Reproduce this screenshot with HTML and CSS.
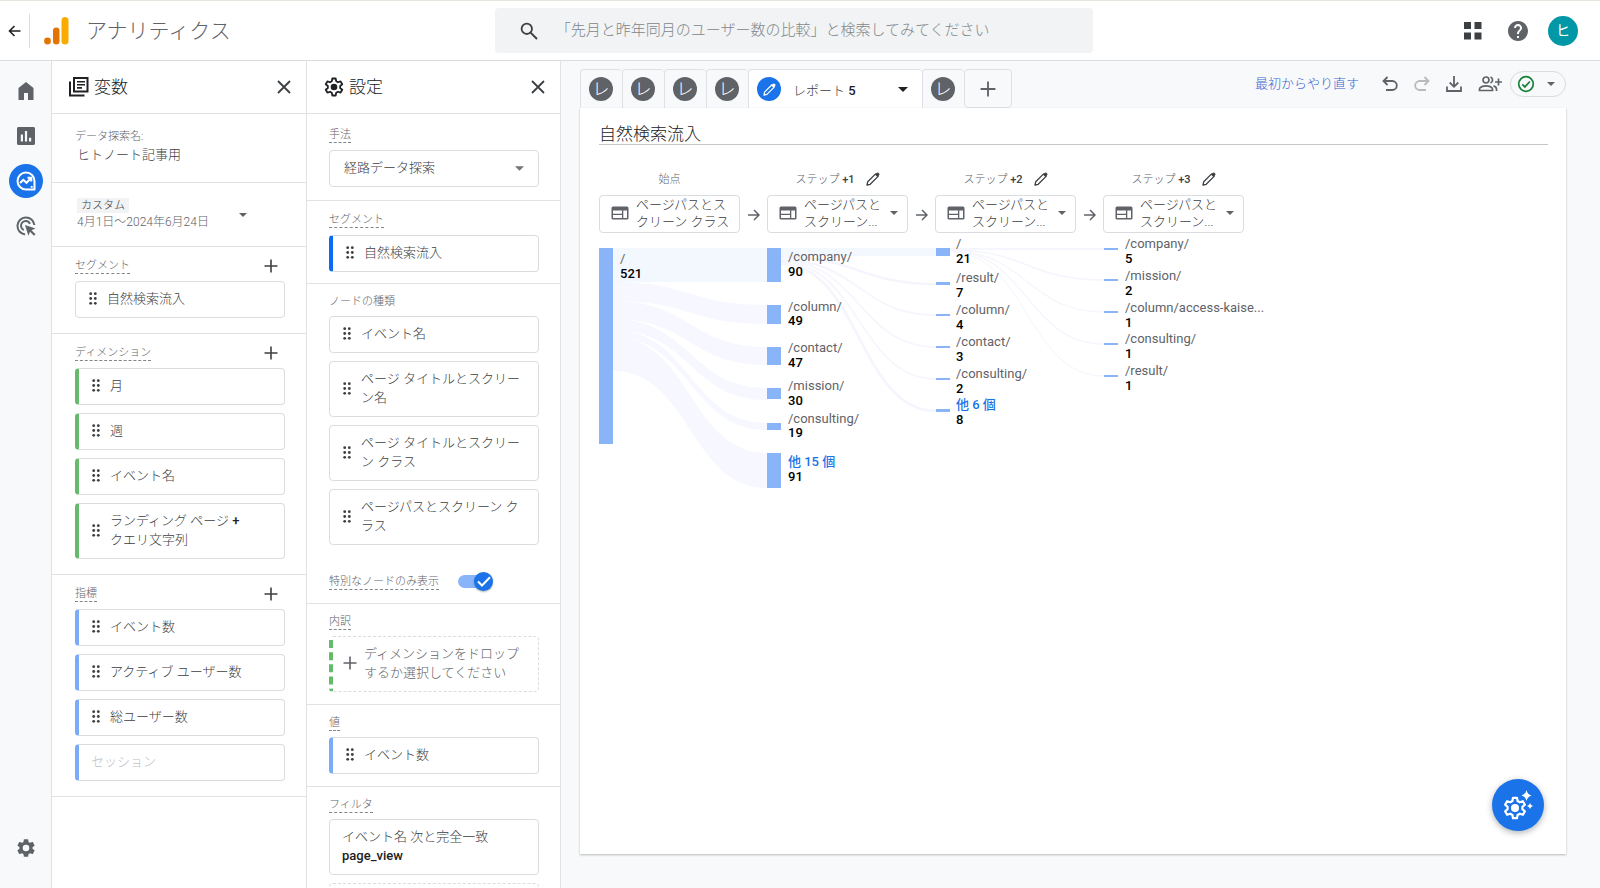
FILE: index.html
```html
<!DOCTYPE html>
<html lang="ja">
<head>
<meta charset="utf-8">
<meta name="viewport" content="width=device-width, initial-scale=1">
<title>アナリティクス</title>
<link rel="stylesheet" href="styles.css">
</head>
<body>
<svg class="sprite" aria-hidden="true">
  <symbol id="i-plus" viewBox="0 0 14 14"><path d="M7 .5v13M.5 7h13" fill="none" stroke="currentColor" stroke-width="1.6"/></symbol>
  <symbol id="i-close" viewBox="0 0 14 14"><path d="M1 1l12 12M13 1L1 13" fill="none" stroke="currentColor" stroke-width="1.8"/></symbol>
  <symbol id="i-grip" viewBox="0 0 8 13"><g fill="currentColor"><circle cx="1.7" cy="1.7" r="1.4"/><circle cx="6.3" cy="1.7" r="1.4"/><circle cx="1.7" cy="6.5" r="1.4"/><circle cx="6.3" cy="6.5" r="1.4"/><circle cx="1.7" cy="11.3" r="1.4"/><circle cx="6.3" cy="11.3" r="1.4"/></g></symbol>
  <symbol id="i-caret" viewBox="0 0 10 5"><path d="M0 0h10L5 5z" fill="currentColor"/></symbol>
  <symbol id="i-gear" viewBox="0 0 24 24"><path d="M19.14 12.94c.04-.3.06-.61.06-.94s-.02-.64-.07-.94l2.03-1.58a.49.49 0 0 0 .12-.61l-1.92-3.32a.49.49 0 0 0-.59-.22l-2.39.96a7 7 0 0 0-1.62-.94l-.36-2.54a.48.48 0 0 0-.48-.41h-3.84a.47.47 0 0 0-.47.41l-.36 2.54c-.59.24-1.13.57-1.62.94l-2.39-.96a.48.48 0 0 0-.59.22L2.74 8.87a.47.47 0 0 0 .12.61l2.03 1.58c-.05.3-.09.63-.09.94s.02.64.07.94l-2.03 1.58a.49.49 0 0 0-.12.61l1.92 3.32c.12.22.37.29.59.22l2.39-.96c.5.38 1.03.7 1.62.94l.36 2.54c.05.24.24.41.48.41h3.84c.24 0 .44-.17.47-.41l.36-2.54a6.7 6.7 0 0 0 1.62-.94l2.39.96c.22.08.47 0 .59-.22l1.92-3.32a.47.47 0 0 0-.12-.61zM12 15.6a3.6 3.6 0 1 1 0-7.2 3.6 3.6 0 0 1 0 7.2z" fill="currentColor"/></symbol>
  <symbol id="i-gear-line" viewBox="0 0 24 24"><path d="M10 1.8h4l.6 3.2 2.2 1.3 3.1-1.1 2 3.5-2.5 2.1v2.4l2.5 2.1-2 3.5-3.1-1.1-2.2 1.3-.6 3.2h-4L9.400 19l-2.200-1.300-3.100 1.100-2-3.500 2.500-2.100v-2.400L2.100 8.700l2-3.500 3.100 1.100L9.400 5z" fill="none" stroke="currentColor" stroke-width="2.2" stroke-linejoin="round"/><circle cx="12" cy="12" r="4" fill="currentColor"/></symbol>
  <symbol id="i-pencil" viewBox="0 0 14 14"><path d="M1 13l.7-3.200L9.600 1.900l2.500 2.500-7.900 7.900z" fill="none" stroke="currentColor" stroke-width="1.3" stroke-linejoin="round"/><path d="M9 2.600L11 .7q.7-.5 1.300 0l1 1q.5.600 0 1.300l-1.900 2z" fill="currentColor"/></symbol>
  <symbol id="i-web" viewBox="0 0 18 14"><path fill="currentColor" fill-rule="evenodd" d="M2 .5h14q1.500 0 1.500 1.500v10q0 1.500-1.500 1.500H2Q.5 13.500.5 12V2Q.5.500 2 .5zM2 4.500v3.200h9V4.500zM2 8.900V12h9V8.900zM12.300 4.500V12H16V4.500z"/></symbol>
  <symbol id="i-arrow" viewBox="0 0 12 12"><path d="M0 6h11M6 1l5 5-5 5" fill="none" stroke="currentColor" stroke-width="1.500"/></symbol>
</svg>

<header class="topbar">
  <button class="icon-btn back" aria-label="戻る"><svg width="13" height="12" viewBox="0 0 13 12"><path d="M12.500 6H1.500M6.500 1L1.500 6l5 5" fill="none" stroke="currentColor" stroke-width="1.600"/></svg></button>
  <span class="rule"></span>
  <svg class="logo" width="25" height="28" viewBox="0 0 25 28" aria-hidden="true"><rect x="17.500" width="7" height="27.500" rx="3.500" fill="#f9ab00"/><rect x="9" y="10.500" width="6.500" height="17" rx="3.250" fill="#e37400"/><circle cx="3.500" cy="24" r="3.400" fill="#e37400"/></svg>
  <h1 class="brand">アナリティクス</h1>
  <label class="search">
    <svg width="18" height="18" viewBox="0 0 18 18" aria-hidden="true"><circle cx="6.800" cy="6.800" r="5.200" fill="none" stroke="currentColor" stroke-width="1.800"/><path d="M10.600 10.600L17 17" stroke="currentColor" stroke-width="2"/></svg>
    <input type="search" aria-label="検索" placeholder="「先月と昨年同月のユーザー数の比較」と検索してみてください">
  </label>
  <div class="account">
    <button class="icon-btn apps" aria-label="アプリ"><svg width="18" height="18" viewBox="0 0 18 18"><path d="M0 0h7v7H0zM10.500 0h7v7h-7zM0 10.500h7v7H0zM10.500 10.500h7v7h-7z" fill="currentColor"/></svg></button>
    <button class="icon-btn" aria-label="ヘルプ"><svg width="20" height="20" viewBox="2 2 20 20"><path fill="currentColor" d="M12 2C6.480 2 2 6.480 2 12s4.480 10 10 10 10-4.480 10-10S17.520 2 12 2zm1 17h-2v-2h2v2zm2.070-7.750l-.9.920C13.450 12.900 13 13.500 13 15h-2v-.5c0-1.100.450-2.100 1.170-2.830l1.240-1.260c.370-.360.590-.860.590-1.410 0-1.100-.9-2-2-2s-2 .9-2 2H8c0-2.210 1.790-4 4-4s4 1.790 4 4c0 .880-.360 1.680-.930 2.250z"/></svg></button>
    <button class="avatar" aria-label="アカウント">ヒ</button>
  </div>
</header>

<div class="shell">
  <nav class="rail" aria-label="メイン">
    <a href="#" class="rail-item" aria-label="ホーム"><svg width="20" height="20" viewBox="2 2 20 20"><path d="M4.500 21V9L12 3l7.500 6v12H14v-7h-4v7z" fill="currentColor"/></svg></a>
    <a href="#" class="rail-item" aria-label="レポート"><svg width="18" height="18" viewBox="3 3 18 18"><path d="M19.500 3h-15C3.700 3 3 3.700 3 4.500v15c0 .8.700 1.500 1.500 1.500h15c.8 0 1.500-.7 1.500-1.500v-15c0-.8-.7-1.500-1.500-1.500zM9 17.500H6.800v-7H9zm4.100 0h-2.200V7h2.200zm4.100 0H15v-3.800h2.200z" fill="currentColor"/></svg></a>
    <a href="#" class="rail-item active" aria-label="探索"><svg width="20" height="20" viewBox="0 0 20 20"><path d="M18.500 18.500H10A8.500 8.500 0 1 1 18.500 10z" fill="none" stroke="currentColor" stroke-width="2" stroke-linejoin="round"/><path d="M4 12l3.300-3.200 3.200 3 4.300-4.500M11.500 6.800h3.800v3.800" fill="none" stroke="currentColor" stroke-width="2"/><circle cx="15.700" cy="15.900" r="1.100" fill="currentColor"/></svg></a>
    <a href="#" class="rail-item" aria-label="広告"><svg width="20" height="20" viewBox="0 0 20 20"><g fill="none" stroke="currentColor" stroke-width="2"><path d="M9 18.400A8.500 8.500 0 1 1 18.400 9"/><path d="M7.800 14A4.700 4.700 0 1 1 14 7.800"/></g><path d="M9 9l10.500 3.500-4 1.800 4 4-1.500 1.500-4-4-1.600 4z" fill="currentColor"/></svg></a>
    <a href="#" class="rail-item bottom" aria-label="管理"><svg width="22" height="22"><use href="#i-gear"/></svg></a>
  </nav>

  <section class="panel">
    <header class="panel-head">
      <svg width="20" height="20" viewBox="0 0 20 20" aria-hidden="true"><g fill="none" stroke="currentColor" stroke-width="2"><rect x="5" y="1" width="13.500" height="13.500"/><path d="M1 4.500V18.500h14.500"/></g><path d="M8 4.700h8M8 7.800h8M8 10.900h5" stroke="currentColor" stroke-width="1.600"/></svg>
      <h2>変数</h2>
      <button class="icon-btn" aria-label="変数を閉じる"><svg width="14" height="14"><use href="#i-close"/></svg></button>
    </header>
    <div class="block name-block">
      <label for="exp-name">データ探索名:</label>
      <input id="exp-name" class="name-input" value="ヒトノート記事用">
    </div>
    <div class="block date-block">
      <button class="date-btn">
        <span class="date-text"><span class="badge">カスタム</span><span>4月1日〜2024年6月24日</span></span>
        <svg width="8" height="4"><use href="#i-caret"/></svg>
      </button>
    </div>
    <div class="block">
      <div class="block-head"><h3 class="hint">セグメント</h3><button class="icon-btn" aria-label="セグメントを追加"><svg width="14" height="14"><use href="#i-plus"/></svg></button></div>
      <div class="chips"><div class="chip"><svg class="grip"><use href="#i-grip"/></svg><span>自然検索流入</span></div></div>
    </div>
    <div class="block">
      <div class="block-head"><h3 class="hint">ディメンション</h3><button class="icon-btn" aria-label="ディメンションを追加"><svg width="14" height="14"><use href="#i-plus"/></svg></button></div>
      <div class="chips">
        <div class="chip green"><svg class="grip"><use href="#i-grip"/></svg><span>月</span></div>
        <div class="chip green"><svg class="grip"><use href="#i-grip"/></svg><span>週</span></div>
        <div class="chip green"><svg class="grip"><use href="#i-grip"/></svg><span>イベント名</span></div>
        <div class="chip green"><svg class="grip"><use href="#i-grip"/></svg><span>ランディング ページ <b>+</b><br>クエリ文字列</span></div>
      </div>
    </div>
    <div class="block">
      <div class="block-head"><h3 class="hint">指標</h3><button class="icon-btn" aria-label="指標を追加"><svg width="14" height="14"><use href="#i-plus"/></svg></button></div>
      <div class="chips">
        <div class="chip blue"><svg class="grip"><use href="#i-grip"/></svg><span>イベント数</span></div>
        <div class="chip blue"><svg class="grip"><use href="#i-grip"/></svg><span>アクティブ ユーザー数</span></div>
        <div class="chip blue"><svg class="grip"><use href="#i-grip"/></svg><span>総ユーザー数</span></div>
        <div class="chip blue muted"><span>セッション</span></div>
      </div>
    </div>
  </section>

  <section class="panel settings">
    <header class="panel-head">
      <svg width="20" height="20" aria-hidden="true"><use href="#i-gear-line"/></svg>
      <h2>設定</h2>
      <button class="icon-btn" aria-label="設定を閉じる"><svg width="14" height="14"><use href="#i-close"/></svg></button>
    </header>
    <div class="block method-block">
      <div class="block-head"><label class="hint" for="method">手法</label></div>
      <div class="select-wrap">
        <select id="method"><option>経路データ探索</option></select>
        <svg width="9" height="5" aria-hidden="true"><use href="#i-caret"/></svg>
      </div>
    </div>
    <div class="block segment-block">
      <div class="block-head"><h3 class="hint">セグメント</h3></div>
      <div class="chips"><div class="chip strong"><svg class="grip"><use href="#i-grip"/></svg><span>自然検索流入</span></div></div>
    </div>
    <div class="block">
      <div class="block-head"><h3 class="hint plain">ノードの種類</h3></div>
      <div class="chips">
        <div class="chip"><svg class="grip"><use href="#i-grip"/></svg><span>イベント名</span></div>
        <div class="chip"><svg class="grip"><use href="#i-grip"/></svg><span>ページ タイトルとスクリーン名</span></div>
        <div class="chip"><svg class="grip"><use href="#i-grip"/></svg><span>ページ タイトルとスクリーン クラス</span></div>
        <div class="chip"><svg class="grip"><use href="#i-grip"/></svg><span>ページパスとスクリーン クラス</span></div>
      </div>
      <div class="toggle-row">
        <label class="hint" for="unique">特別なノードのみ表示</label>
        <span class="switch"><input type="checkbox" id="unique" checked><span class="knob"><svg width="14" height="11" viewBox="0 0 14 11"><path d="M1 5.500l4 4L13 1.300" fill="none" stroke="#fff" stroke-width="2"/></svg></span></span>
      </div>
    </div>
    <div class="block">
      <div class="block-head"><h3 class="hint">内訳</h3></div>
      <button class="drop"><svg width="14" height="14"><use href="#i-plus"/></svg><span>ディメンションをドロップするか選択してください</span></button>
    </div>
    <div class="block">
      <div class="block-head"><h3 class="hint">値</h3></div>
      <div class="chips"><div class="chip blue"><svg class="grip"><use href="#i-grip"/></svg><span>イベント数</span></div></div>
    </div>
    <div class="block">
      <div class="block-head"><h3 class="hint">フィルタ</h3></div>
      <div class="chips">
        <div class="chip filter"><span>イベント名 次と完全一致<br><b>page_view</b></span></div>
        <button class="drop bare" aria-label="フィルタを追加"></button>
      </div>
    </div>
  </section>

  <main class="stage">
    <div class="strip">
      <div class="tabs" role="tablist">
        <button class="tab" role="tab"><span class="dot">レ</span></button>
        <button class="tab" role="tab"><span class="dot">レ</span></button>
        <button class="tab" role="tab"><span class="dot">レ</span></button>
        <button class="tab" role="tab"><span class="dot">レ</span></button>
        <button class="tab current" role="tab" aria-selected="true"><span class="dot"><svg width="13" height="13"><use href="#i-pencil"/></svg></span><span class="tab-name">レポート <b>5</b></span><svg width="10" height="5"><use href="#i-caret"/></svg></button>
        <button class="tab" role="tab"><span class="dot">レ</span></button>
        <button class="tab add" aria-label="タブを追加"><svg width="16" height="16"><use href="#i-plus"/></svg></button>
      </div>
      <div class="tools">
        <a href="#" class="reset">最初からやり直す</a>
        <button class="icon-btn" aria-label="元に戻す"><svg width="16" height="16" viewBox="0 0 16 16"><path d="M5.500 1L1.500 5l4 4M1.500 5h8.800a4.500 4.500 0 0 1 0 9H4" fill="none" stroke="currentColor" stroke-width="1.800"/></svg></button>
        <button class="icon-btn faded" aria-label="やり直す"><svg width="16" height="16" viewBox="0 0 16 16"><path d="M10.500 1l4 4-4 4M14.500 5H5.700a4.500 4.500 0 0 0 0 9H12" fill="none" stroke="currentColor" stroke-width="1.800"/></svg></button>
        <button class="icon-btn" aria-label="ダウンロード"><svg width="16" height="16" viewBox="0 0 16 16"><path d="M8 0v10.500M3.700 6.500L8 10.800l4.300-4.300M1 10.500V15h14v-4.500" fill="none" stroke="currentColor" stroke-width="1.800"/></svg></button>
        <button class="icon-btn" aria-label="共有"><svg width="24" height="16" viewBox="0 0 24 16"><g fill="none" stroke="currentColor" stroke-width="1.700"><circle cx="8" cy="4" r="3"/><path d="M1.500 14.500V13c0-2 4-3.200 6.500-3.200s6.500 1.200 6.500 3.200v1.500zM12.500 1a3.200 3.200 0 0 1 0 6M15.500 9.900c1.800.6 3 1.600 3 3.100v2M20.500 2.500v7M17 6h7"/></g></svg></button>
        <button class="status" aria-label="ステータス"><svg width="18" height="18" viewBox="0 0 18 18"><g fill="none" stroke="#188038" stroke-width="1.700"><circle cx="9" cy="9" r="7.300"/><path d="M5.300 9.300l2.600 2.600 5-5.400"/></g></svg><svg width="8" height="4"><use href="#i-caret"/></svg></button>
      </div>
    </div>

    <div class="card">
      <input class="title" aria-label="タイトル" value="自然検索流入">
      <div class="steps">
        <div class="step">
          <div class="step-label">始点</div>
          <button class="step-box"><svg width="18" height="14"><use href="#i-web"/></svg><span>ページパスとスクリーン クラス</span></button>
        </div>
        <svg class="step-arrow"><use href="#i-arrow"/></svg>
        <div class="step">
          <div class="step-label"><span>ステップ <b>+1</b></span><button class="icon-btn" aria-label="編集"><svg width="14" height="14"><use href="#i-pencil"/></svg></button></div>
          <button class="step-box"><svg width="18" height="14"><use href="#i-web"/></svg><span>ページパスと<br>スクリーン...</span><svg class="caret" width="8" height="4"><use href="#i-caret"/></svg></button>
        </div>
        <svg class="step-arrow"><use href="#i-arrow"/></svg>
        <div class="step">
          <div class="step-label"><span>ステップ <b>+2</b></span><button class="icon-btn" aria-label="編集"><svg width="14" height="14"><use href="#i-pencil"/></svg></button></div>
          <button class="step-box"><svg width="18" height="14"><use href="#i-web"/></svg><span>ページパスと<br>スクリーン...</span><svg class="caret" width="8" height="4"><use href="#i-caret"/></svg></button>
        </div>
        <svg class="step-arrow"><use href="#i-arrow"/></svg>
        <div class="step">
          <div class="step-label"><span>ステップ <b>+3</b></span><button class="icon-btn" aria-label="編集"><svg width="14" height="14"><use href="#i-pencil"/></svg></button></div>
          <button class="step-box"><svg width="18" height="14"><use href="#i-web"/></svg><span>ページパスと<br>スクリーン...</span><svg class="caret" width="8" height="4"><use href="#i-caret"/></svg></button>
        </div>
      </div>

      <svg class="flow" width="700" height="270" viewBox="0 -15 700 270" role="img" aria-label="経路データ探索">
        <path class="link first" d="M14 0H168V34H14z"/>
        <g class="link">
          <path d="M14 34C91 34 91 57 168 57V76C91 76 91 53 14 53z"/>
          <path d="M14 53C91 53 91 99 168 99V117C91 117 91 71 14 71z"/>
          <path d="M14 71C91 71 91 140 168 140V152C91 152 91 82 14 82z"/>
          <path d="M14 82C91 82 91 175 168 175V182C91 182 91 89 14 89z"/>
          <path d="M14 89C91 89 91 205 168 205V240C91 240 91 123 14 123z"/>
        </g>
        <path class="link first" d="M182 0H337V8H182z"/>
        <g class="thread">
          <path stroke-width="2.500" d="M182 9C260 9 260 36 337 36"/>
          <path stroke-width="1.800" d="M182 12C260 12 260 67 337 67"/>
          <path stroke-width="1.400" d="M182 13C260 13 260 99 337 99"/>
          <path stroke-width="1.400" d="M182 14C260 14 260 131 337 131"/>
          <path stroke-width="2.500" d="M182 16C260 16 260 163 337 163"/>
          <path stroke-width="2" d="M351 1H505"/>
          <path stroke-width="1.500" d="M351 2C428 2 428 32 505 32"/>
          <path stroke-width="1.200" d="M351 3C428 3 428 64 505 64"/>
          <path stroke-width="1.200" d="M351 3C428 3 428 96 505 96"/>
          <path stroke-width="1" d="M351 4C428 4 428 128 505 128"/>
        </g>
        <g class="node">
          <rect width="14" height="196"/>
          <rect x="168" width="14" height="34"/><rect x="168" y="57" width="14" height="19"/><rect x="168" y="99" width="14" height="18"/><rect x="168" y="140" width="14" height="11"/><rect x="168" y="175" width="14" height="7"/><rect x="168" y="205" width="14" height="35"/>
          <rect x="337" width="14" height="8"/><rect x="337" y="34" width="14" height="3"/><rect x="337" y="66" width="14" height="2"/><rect x="337" y="98" width="14" height="2"/><rect x="337" y="130" width="14" height="2"/><rect x="337" y="161" width="14" height="3"/>
          <rect x="505" width="14" height="2"/><rect x="505" y="31" width="14" height="2"/><rect x="505" y="63" width="14" height="2"/><rect x="505" y="95" width="14" height="2"/><rect x="505" y="127" width="14" height="2"/>
        </g>
        <g class="path-name">
          <text x="21" y="15">/</text>
          <text x="189" y="13">/company/</text><text x="189" y="63">/column/</text><text x="189" y="104">/contact/</text><text x="189" y="142">/mission/</text><text x="189" y="175">/consulting/</text>
          <text x="357" y="0">/</text><text x="357" y="34">/result/</text><text x="357" y="66">/column/</text><text x="357" y="98">/contact/</text><text x="357" y="130">/consulting/</text>
          <text x="526" y="0">/company/</text><text x="526" y="32">/mission/</text><text x="526" y="64">/column/access-kaise...</text><text x="526" y="95">/consulting/</text><text x="526" y="127">/result/</text>
        </g>
        <g class="more"><text x="189" y="218">他 15 個</text><text x="357" y="161">他 6 個</text></g>
        <g class="count">
          <text x="21" y="30">521</text>
          <text x="189" y="28">90</text><text x="189" y="77">49</text><text x="189" y="119">47</text><text x="189" y="157">30</text><text x="189" y="189">19</text><text x="189" y="233">91</text>
          <text x="357" y="15">21</text><text x="357" y="49">7</text><text x="357" y="81">4</text><text x="357" y="113">3</text><text x="357" y="145">2</text><text x="357" y="176">8</text>
          <text x="526" y="15">5</text><text x="526" y="47">2</text><text x="526" y="79">1</text><text x="526" y="110">1</text><text x="526" y="142">1</text>
        </g>
      </svg>

      <button class="fab" aria-label="設定候補"><svg width="32" height="32" viewBox="0 0 32 32"><g transform="translate(1 7)"><use href="#i-gear-line" width="24" height="24"/></g><path d="M24.500 1q1 4.500 5 5.500-4 1-5 5.500-1-4.500-5-5.500 4-1 5-5.500zM28 14q.7 2.500 3 3-2.300.6-3 3-.7-2.400-3-3 2.300-.5 3-3z" fill="currentColor"/></svg></button>
    </div>
  </main>
</div>
</body>
</html>
```

FILE: styles.css
```css
* { box-sizing: border-box; }

body {
  margin: 0;
  height: 100vh;
  display: flex;
  flex-direction: column;
  overflow: hidden;
  border-top: 1px solid #e6e6de;
  background: #fff;
  color: #3c4043;
  font-family: Roboto, "Noto Sans CJK JP", sans-serif;
  font-size: 13px;
  font-weight: 300;
  line-height: 19px;
}

h1, h2, h3 { margin: 0; font-weight: 300; }
b { font-weight: 500; color: #202124; }
svg { flex: none; display: block; }
button, input, select { font: inherit; color: inherit; }
button { margin: 0; padding: 0; border: 0; background: none; cursor: pointer; }
.sprite { position: absolute; width: 0; height: 0; }
.icon-btn { display: flex; color: #3c4043; }

/* Top bar */
.topbar {
  flex: none;
  display: flex;
  align-items: center;
  height: 60px;
  padding: 0 22px 0 8px;
  border-bottom: 1px solid #dadce0;
}
.back { color: #202124; }
.rule { width: 1px; height: 34px; margin: 0 14px 0 8px; background: #dadce0; }
.brand { margin-left: 17px; color: #5f6368; font-size: 21px; line-height: 30px; }
.search {
  display: flex;
  align-items: center;
  gap: 18px;
  flex: 0 1 598px;
  height: 45px;
  margin-left: 264px;
  padding: 0 25px;
  border-radius: 4px;
  background: #f1f3f4;
  color: #3c4043;
}
.search input {
  flex: 1;
  min-width: 0;
  padding: 0;
  border: 0;
  outline: 0;
  background: none;
  font-size: 15px;
}
.search input::placeholder { color: #80868b; opacity: 1; }
.account { display: flex; align-items: center; margin-left: auto; color: #5f6368; }
.account .icon-btn { margin-right: 20px; color: #5f6368; }
.account .apps { margin-right: 26px; color: #3c4043; }
.avatar {
  width: 30px;
  height: 30px;
  border-radius: 50%;
  background: #0097a7;
  color: #fff;
  font-size: 14px;
  font-weight: 400;
}

/* Frame */
.shell { flex: 1; min-height: 0; display: flex; }
.rail {
  flex: none;
  display: flex;
  flex-direction: column;
  align-items: center;
  gap: 11px;
  width: 51px;
  padding: 13px 0 23px;
  background: #f8f9fb;
}
.rail-item {
  display: grid;
  place-items: center;
  width: 34px;
  height: 34px;
  border-radius: 50%;
  color: #5f6368;
}
.rail-item.active { background: #1a73e8; color: #fff; }
.rail-item.bottom { margin-top: auto; }

/* Panels */
.panel {
  flex: none;
  width: 255px;
  overflow: hidden;
  border-left: 1px solid #e0e2e4;
}
.settings { border-right: 1px solid #e0e2e4; }
.panel-head {
  display: flex;
  align-items: center;
  height: 53px;
  padding: 0 15px 1px 17px;
  border-bottom: 1px solid #e0e2e4;
  color: #202124;
}
.panel-head h2 { margin-left: 5px; font-size: 17px; line-height: 24px; }
.panel-head .icon-btn { margin-left: auto; }
.block { padding: 0 21px 15px 23px; border-bottom: 1px solid #e0e2e4; }
.block-head { display: flex; justify-content: space-between; align-items: flex-start; padding: 11px 7px 7px 0; }
.block-head .icon-btn { margin-top: 1px; }
.settings .block { padding-bottom: 12px; padding-left: 22px; }
.settings .block-head { padding: 10px 0 6px; }
.settings .method-block { padding-bottom: 13px; }
.settings .method-block .block-head { padding: 13px 0 7px; }
.settings .segment-block { padding-bottom: 11px; }
.settings .segment-block .block-head { padding: 11px 0 7px; }
.hint {
  border-bottom: 1px dashed #80868b;
  color: #5f6368;
  font-size: 11px;
  line-height: 15px;
}
.hint.plain { border-color: transparent; }

.name-block { padding-top: 15px; height: 69px; font-size: 11px; line-height: 15px; color: #5f6368; }
.name-block label { display: block; }
.name-input { display: block; width: 100%; height: 18px; padding: 0 2px; border: 0; color: #3c4043; font-size: 13px; }
.date-block { height: 64px; padding: 15px 24px 0 25px; }
.date-btn { display: flex; align-items: center; justify-content: space-between; width: 170px; text-align: left; color: #5f6368; }
.date-text { display: flex; flex-direction: column; align-items: flex-start; font-size: 12px; line-height: 18px; }
.badge { padding: 0 4px; background: #f1f3f4; font-size: 11px; line-height: 15px; color: #3c4043; }

.chips { display: flex; flex-direction: column; gap: 8px; }
.chip {
  display: flex;
  align-items: center;
  gap: 10px;
  min-height: 37px;
  padding: 7px 12px 9px 13px;
  border: 1px solid #dadce0;
  border-radius: 4px;
}
.chip.green, .chip.blue, .chip.strong { border-left: 4px solid #66bb6a; }
.chip.blue { border-left-color: #7baaf7; }
.chip.strong { border-left-color: #0b6bf2; }
.chip.muted { padding-left: 12px; color: #bdc1c6; }
.chip.filter { padding-left: 12px; }
.grip { width: 8px; height: 13px; color: #3c4043; }

.select-wrap { display: grid; align-items: center; }
.select-wrap > * { grid-area: 1 / 1; }
.select-wrap svg { justify-self: end; margin-right: 15px; color: #757575; pointer-events: none; }
.select-wrap select {
  appearance: none;
  width: 100%;
  height: 37px;
  padding: 0 14px 2px;
  border: 1px solid #dadce0;
  border-radius: 4px;
  background: #fff;
}

.toggle-row { display: flex; align-items: center; gap: 19px; padding-top: 27px; }
.switch { display: grid; align-items: center; width: 35px; height: 19px; }
.switch > * { grid-area: 1 / 1; }
.switch input { appearance: none; width: 30px; height: 13px; margin: 0; border-radius: 7px; background: #8ab4f8; }
.knob {
  justify-self: end;
  display: grid;
  place-items: center;
  width: 19px;
  height: 19px;
  border-radius: 50%;
  background: #1a73e8;
  box-shadow: 0 1px 2px rgba(60, 64, 67, .4);
  pointer-events: none;
}

.drop {
  display: flex;
  align-items: center;
  gap: 7px;
  width: 100%;
  min-height: 56px;
  padding: 7px 12px 9px 10px;
  border: 1px dashed #dadce0;
  border-left: 4px dashed #66bb6a;
  border-radius: 4px;
  color: #5f6368;
  text-align: left;
}
.drop.bare { border-left: 1px dashed #dadce0; }

/* Report area */
.stage {
  flex: 1;
  min-width: 0;
  display: flex;
  flex-direction: column;
  padding: 8px 34px 34px 19px;
  background: #f8f9fa;
}
.strip { flex: none; display: flex; align-items: flex-start; justify-content: space-between; }
.tabs { display: flex; height: 39px; }
.tab {
  display: flex;
  align-items: center;
  justify-content: center;
  width: 42px;
  padding-right: 1px;
  border: solid #dfe1e4;
  border-width: 1px 0 0 1px;
  border-radius: 4px 4px 0 0;
}
.tab.current { justify-content: flex-start; width: 174px; padding: 0 14px 0 8px; background: #fff; color: #202124; }
.tab.current > svg { margin-left: auto; }
.tab.add { width: 48px; border-width: 1px; border-radius: 4px; color: #5f6368; }
.tab-name { margin-left: 12px; padding-top: 3px; color: #3c4043; }
.dot {
  display: grid;
  place-items: center;
  width: 24px;
  height: 24px;
  border-radius: 50%;
  background: #5f6368;
  color: #fff;
  font-size: 17px;
  line-height: 22px;
}
.current .dot { background: #1a73e8; }
.tools { display: flex; align-items: center; gap: 16px; padding-top: 2px; }
.tools .icon-btn { color: #5f6368; }
.tools .faded { color: #b8bbbe; }
.reset { margin-right: 7px; padding-bottom: 1px; color: #3367d6; text-decoration: none; }
.status {
  display: flex;
  align-items: center;
  gap: 12px;
  width: 56px;
  height: 26px;
  margin-left: -8px;
  padding: 0 6px;
  border: 1px solid #dadce0;
  border-radius: 13px;
  color: #5f6368;
}

.card {
  position: relative;
  flex: 1;
  min-height: 0;
  padding: 13px 18px 13px 19px;
  background: #fff;
  box-shadow: 0 1px 2px rgba(60, 64, 67, .35);
}
.title {
  display: block;
  width: 100%;
  height: 24px;
  padding: 0;
  border: 0;
  border-bottom: 1px solid #c4c7ca;
  outline: 0;
  color: #202124;
  font-size: 17px;
}
.steps { display: flex; align-items: flex-end; padding-top: 24px; }
.step { width: 141px; }
.step-label { display: flex; align-items: center; justify-content: center; gap: 11px; height: 20px; margin-bottom: 6px; font-size: 11px; color: #5f6368; }
.step-label b { color: #3c4043; }
.step-box {
  display: flex;
  align-items: center;
  gap: 7px;
  width: 100%;
  height: 38px;
  padding: 0 9px 2px 11px;
  border: 1px solid #dadce0;
  border-radius: 4px;
  color: #5f6368;
  line-height: 17px;
  text-align: left;
}
.step-box span { color: #3c4043; }
.step-box .caret { margin-left: auto; }
.step-arrow { width: 12px; height: 12px; margin: 0 7px 12px 8px; color: #5f6368; }

.flow { font-size: 13px; font-weight: 400; }
.link { fill: #f6f7ff; }
.link.first { fill: #f3f7fe; }
.thread { fill: none; stroke: #f4f5fd; }
.node { fill: #8ab4f8; }
.path-name { fill: #5f6368; }
.more { fill: #1a73e8; font-weight: 500; }
.count { fill: #000; font-weight: 500; }

.fab {
  position: absolute;
  right: 22px;
  bottom: 23px;
  display: grid;
  place-items: center;
  width: 52px;
  height: 52px;
  border-radius: 50%;
  background: #1a73e8;
  color: #fff;
  box-shadow: 0 2px 6px rgba(60, 64, 67, .4);
}
```
